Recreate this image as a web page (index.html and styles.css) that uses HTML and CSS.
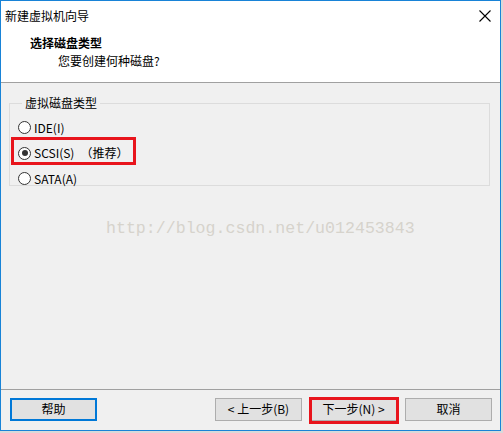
FILE: index.html
```html
<!DOCTYPE html>
<html lang="zh">
<head>
<meta charset="utf-8">
<link rel="stylesheet" href="styles.css">
</head>
<body>
<div class="window">
  <div class="titlebar">
    <span class="title">新建虚拟机向导</span>
    <svg class="close" width="12" height="12" viewBox="0 0 12 12"><path d="M0.5 0.5 L11.5 11.5 M11.5 0.5 L0.5 11.5" stroke="#000" stroke-width="1.1" fill="none"/></svg>
  </div>
  <div class="header">
    <div class="h-title">选择磁盘类型</div>
    <div class="h-sub">您要创建何种磁盘?</div>
  </div>
  <div class="content">
    <fieldset class="group">
      <legend>虚拟磁盘类型</legend>
      <div class="radio"><span class="dot"></span><span>IDE(I)</span></div>
      <div class="radio"><span class="dot on"></span><span>SCSI(S)</span><span class="rec">（推荐）</span></div>
      <div class="radio"><span class="dot"></span><span>SATA(A)</span></div>
    </fieldset>
    <div class="mark-scsi"></div>
    <div class="watermark">http://blog.csdn.net/u012453843</div>
  </div>
  <div class="footer">
    <button class="btn help">帮助</button>
    <div class="spacer"></div>
    <button class="btn">&lt; 上一步(B)</button>
    <button class="btn next">下一步(N) &gt;<span class="mark-next"></span></button>
    <button class="btn">取消</button>
  </div>
</div>
</body>
</html>
```

FILE: styles.css
```css
html, body {
  margin: 0;
  padding: 0;
}
body {
  width: 503px;
  height: 433px;
  background: #d9d9d9;
  font-family: "Noto Sans CJK SC", "Liberation Sans", sans-serif;
  font-size: 12px;
  color: #000;
}
.window {
  width: 499px;
  height: 429px;
  border: 1px solid #1883d7;
  background: #f0f0f0;
  display: flex;
  flex-direction: column;
}
.titlebar {
  height: 30px;
  background: #fff;
  display: flex;
  align-items: center;
  padding: 0 9px 0 4px;
  justify-content: space-between;
}
.title {
  line-height: 16px;
  margin-top: -1px;
}
.close {
  margin-top: -1px;
}
.header {
  background: #fff;
  border-bottom: 1px solid #a0a0a0;
  padding: 4px 0 0 29px;
  box-sizing: border-box;
  height: 52px;
}
.h-title {
  font-weight: bold;
  line-height: 16px;
}
.h-sub {
  line-height: 16px;
  margin-top: 2px;
  padding-left: 28px;
}
.content {
  flex: 1;
  position: relative;
  padding: 12px 10px 0 8px;
  border-bottom: 1px solid #a0a0a0;
}
.group {
  margin: 0;
  padding: 4px 0 0 8px;
  height: 85px;
  border: 1px solid #dcdcdc;
  box-sizing: content-box;
}
.group legend {
  padding: 0 3px;
  margin-left: 4px;
  line-height: 16px;
}
.radio {
  display: flex;
  align-items: center;
  height: 25.5px;
  line-height: 16px;
}
.dot {
  width: 11px;
  height: 11px;
  border: 1px solid #333;
  border-radius: 50%;
  background: #fff;
  margin-right: 3px;
  position: relative;
  flex: none;
}
.dot.on::after {
  content: "";
  position: absolute;
  left: 2.5px;
  top: 2.5px;
  width: 6px;
  height: 6px;
  border-radius: 50%;
  background: #333;
}
.rec {
  margin-left: 6px;
}
.mark-scsi {
  position: absolute;
  left: 10px;
  top: 54px;
  width: 119px;
  height: 22px;
  border: 3px solid #e8141c;
}
.watermark {
  position: absolute;
  left: 105px;
  top: 136px;
  font-family: "Liberation Mono", monospace;
  font-size: 16.6px;
  color: #d6d3cc;
  line-height: 20px;
}
.footer {
  height: 40px;
  display: flex;
  align-items: center;
  padding: 0 8px 2px 9px;
  box-sizing: border-box;
  gap: 8px;
}
.spacer {
  flex: 1;
}
.btn {
  width: 87px;
  height: 23px;
  border: 1px solid #adadad;
  background: #e1e1e1;
  font-family: "Noto Sans CJK SC", "Liberation Sans", sans-serif;
  font-size: 12px;
  color: #000;
  padding: 0;
  line-height: 16px;
  position: relative;
}
.btn.help {
  border: 2px solid #0078d7;
}
.mark-next {
  position: absolute;
  left: -2px;
  top: -2px;
  width: 84px;
  height: 21px;
  border: 3px solid #e8141c;
}
```
